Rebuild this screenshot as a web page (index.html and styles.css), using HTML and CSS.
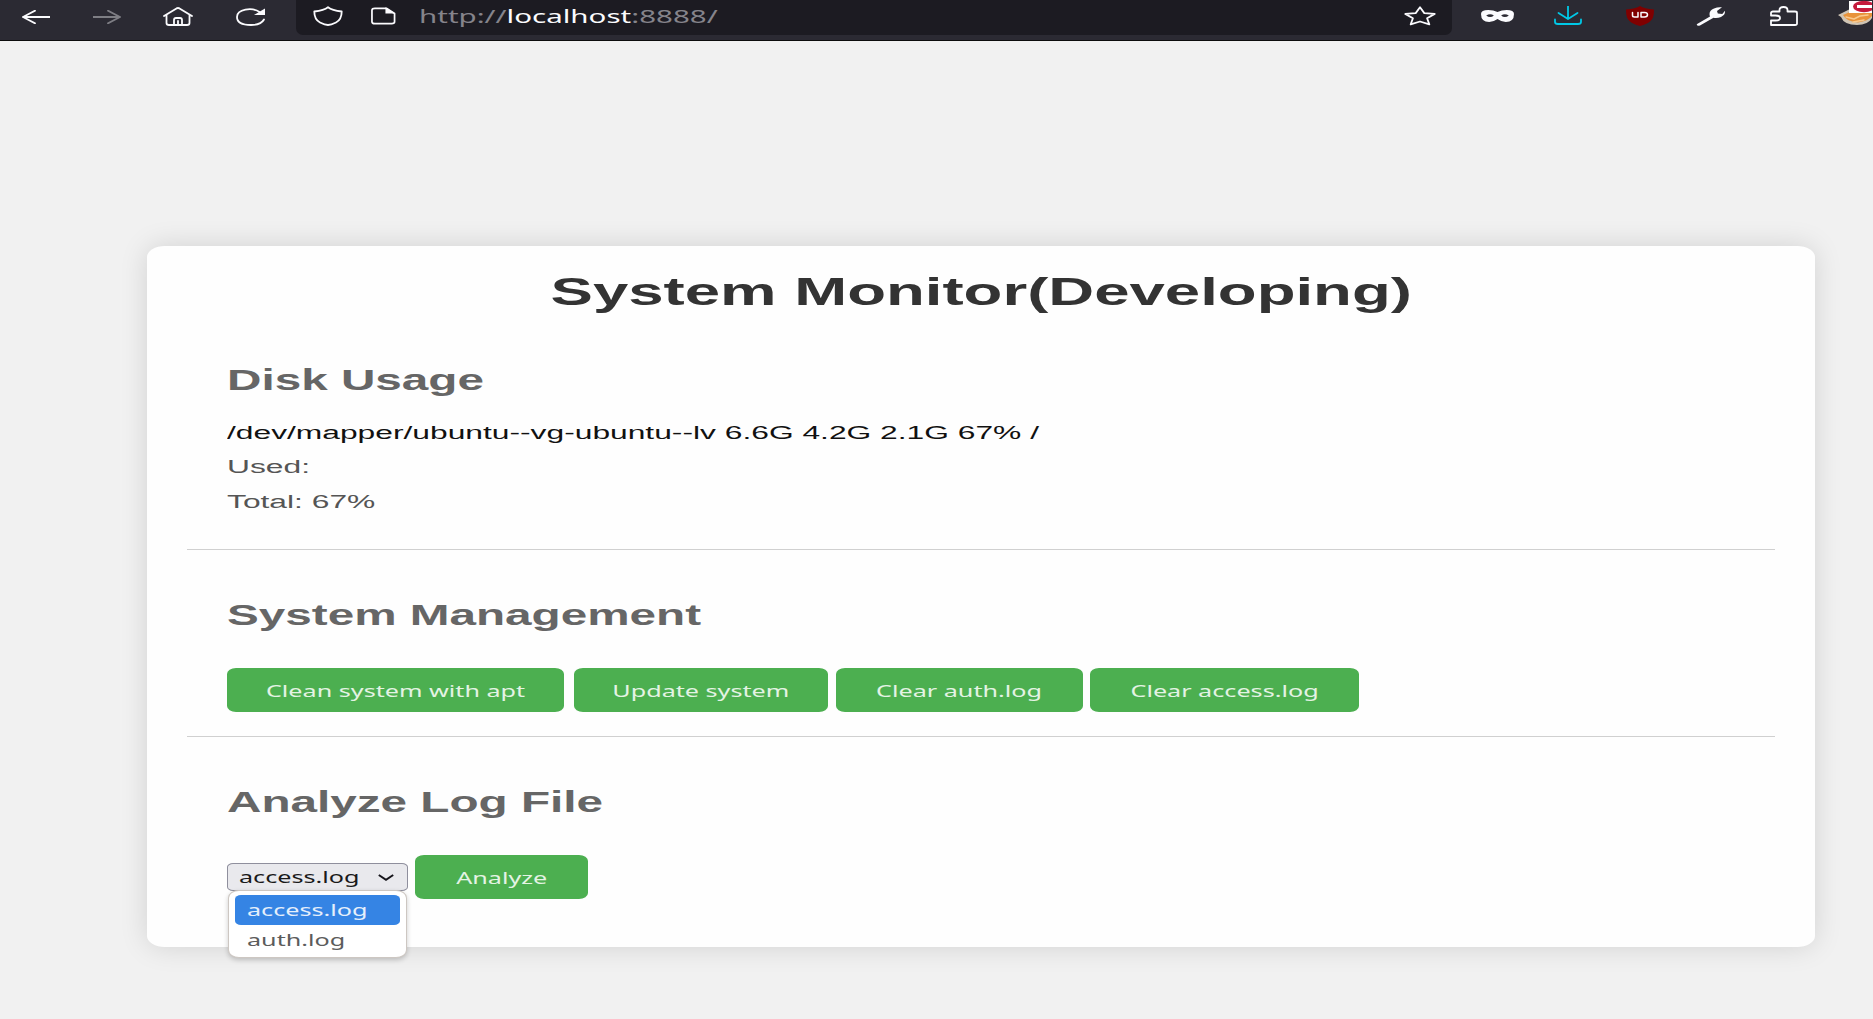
FILE: index.html
```html
<!DOCTYPE html>
<html lang="en">
<head>
<meta charset="utf-8">
<title>System Monitor</title>
<link rel="stylesheet" href="styles.css">
</head>
<body>
<header class="toolbar">
  <nav class="nav">
    <svg class="icon back" viewBox="0 0 28 14"><path d="M28 7H1M13 .7L1 7l12 6.300"/></svg>
    <svg class="icon forward" viewBox="0 0 28 14"><path d="M0 7h27M15 .7L27 7l-12 6.300"/></svg>
    <svg class="icon home" viewBox="0 0 30 19"><path d="M1 9L13.500 1.400q1.500-.8 3 0L29 9M3.500 8v8q0 2 2.500 2h18q2.500 0 2.500-2V8M11 18v-5q0-2 2-2h4q2 0 2 2v5M15 14v4"/></svg>
    <svg class="icon reload" viewBox="0 0 30 18"><path d="M23.500 4C16-1 1 1 1 9s10 8 14 8q10 0 13-5.500"/><path class="solid" d="M29 .5V7H18z"/></svg>
  </nav>
  <div class="urlbar">
    <svg class="icon shield" viewBox="0 0 30 20"><path d="M15 1.200Q11 4.500 1.300 5.500q0 8 5.700 11Q12 19 15 19t8-2.500q5.700-3 5.700-11Q19 4.500 15 1.200z"/></svg>
    <svg class="icon page" viewBox="0 0 26 18"><path d="M4 1h12l8.500 5.500V15q0 2-3 2H4q-3 0-3-2V3q0-2 3-2z"/><path class="solid" d="M15 0l10 6.500H15z"/></svg>
    <div class="address"><span class="wide">http://<b>localhost</b>:8888/</span></div>
    <svg class="icon star" viewBox="0 0 32 20"><path d="M16 1.200l4.300 5.900 10.400.8-7.600 4.400 2.200 6.100L16 15.500l-9.300 2.900 2.200-6.100L1.300 7.900l10.400-.8z"/></svg>
  </div>
  <div class="addons">
    <svg class="icon mask" viewBox="0 0 32 12" preserveAspectRatio="none"><path class="solid" fill-rule="evenodd" d="M0 4Q0 0 7 0q5 0 9 2 4-2 9-2 7 0 7 4 0 8-8 8-4 0-8-3-4 3-8 3-8 0-8-8zM5 5.500Q9 8.500 12.500 5.500 9 3 5 5.500zM19.500 5.500Q23 8.500 27 5.500 23 3 19.500 5.500z"/></svg>
    <svg class="icon download" viewBox="0 0 28 19"><path d="M14 0v13M4.500 7L14 13l9.500-6M1 13.500V16q0 2 3 2h20q3 0 3-2v-2.500"/></svg>
    <svg class="icon blocker" viewBox="0 0 30 20"><path class="badge" d="M15 0q4 2.500 14 3.500 0 9-3.500 11.500-3 3-10.500 5-7.500-2-10.500-5Q1 12.500 1 3.500 11 2.500 15 0z"/><path class="mark" d="M7.500 6.500v3q0 1.500 2 1.500H13V6.500M16 6.500h3.500q3 0 3 2.200T19.500 11H16z"/></svg>
    <svg class="icon wrench" viewBox="0 0 30 19"><path class="solid" d="M.7 17.300L14 9.500q-2-5.500 4-8 4-1.800 8-1.200l-5 3.700.8 2.500 4.500.4L29 3.800Q29.500 8 25 10q-3.500 1.400-7.500.8L4 18.500Q1 19.500.7 17.300z"/></svg>
    <svg class="icon puzzle" viewBox="0 0 28 20"><path d="M1 19v-4.500h4.500q4.500 0 4.500-2.500T5.500 9.500H1V7q0-1.500 2-1.500h6.500V4Q9.500 1 13.500 1t4 3v1.500H25q2 0 2 1.500v10.500q0 1.500-2 1.500z"/></svg>
    <svg class="icon avatar" viewBox="0 0 34 26"><path fill="#cfc4b4" d="M0 15l12-6 22 4v5q-4 7-15 7Q6 25 3 17z"/><path fill="#e8923a" d="M5 15l9-4 20 2v3q-4 5-14 6.500Q9 22 5 15z"/><path d="M8 17l8 2 6-3 8-1M15 22l11-2" stroke="#f9c98d" stroke-width="1.500"/><path fill="#fff" d="M11 1h23v12H11z"/><ellipse cx="26" cy="6.500" rx="11" ry="5.800" fill="#c51b3c"/><path fill="#fff" d="M19 5h15v3H19z"/></svg>
  </div>
</header>
<main class="page-body">
  <div class="card">
    <h1><span class="wide">System Monitor(Developing)</span></h1>
    <section class="block disk">
      <h2><span class="wide">Disk Usage</span></h2>
      <p class="mount"><span class="wide">/dev/mapper/ubuntu--vg-ubuntu--lv 6.6G 4.2G 2.1G 67% /</span></p>
      <p><span class="wide">Used:</span></p>
      <p><span class="wide">Total: 67%</span></p>
    </section>
    <section class="block manage">
      <h2><span class="wide">System Management</span></h2>
      <div class="actions">
        <button class="btn clean"><span class="wide">Clean system with apt</span></button>
        <button class="btn update"><span class="wide">Update system</span></button>
        <button class="btn auth"><span class="wide">Clear auth.log</span></button>
        <button class="btn access"><span class="wide">Clear access.log</span></button>
      </div>
    </section>
    <section class="block analyze">
      <h2><span class="wide">Analyze Log File</span></h2>
      <div class="picker-row">
        <div class="picker">
          <div class="select"><span class="wide">access.log</span><svg class="chevron" viewBox="0 0 16 7"><path d="M.8 1L8 5.800 15.200 1"/></svg></div>
          <div class="menu">
            <div class="option selected"><span class="wide">access.log</span></div>
            <div class="option"><span class="wide">auth.log</span></div>
          </div>
        </div>
        <button class="btn run"><span class="wide">Analyze</span></button>
      </div>
    </section>
  </div>
</main>
</body>
</html>
```
FILE: styles.css
```css
* { box-sizing: border-box; }
body {
  margin: 0;
  height: 1019px;
  overflow: hidden;
  background: #f1f1f1;
  font-family: "Liberation Sans", Arial, sans-serif;
}
h1, h2, p { margin: 0; }

/* Extended-width lettering */
.wide {
  display: inline-block;
  white-space: nowrap;
  transform: scaleX(1.655);
  transform-origin: left center;
}

/* Browser toolbar */
.toolbar {
  display: flex;
  height: 41px;
  background: #2b2a33;
  border-bottom: 1px solid #0c0c0d;
}
.icon {
  display: block;
  flex: none;
  fill: none;
  stroke: #fbfbfe;
  stroke-width: 1.800;
  stroke-linejoin: round;
  stroke-linecap: round;
}
.icon .solid { fill: #fbfbfe; stroke: none; }
.nav { display: flex; width: 296px; padding-left: 22px; flex: none; }
.back { width: 28px; height: 14px; margin-top: 10px; }
.forward { width: 28px; height: 14px; margin: 10px 0 0 43px; opacity: .4; }
.home { width: 30px; height: 19px; margin: 7px 0 0 42px; }
.reload { width: 30px; height: 18px; margin: 8px 0 0 43px; }
.urlbar {
  display: flex;
  flex: none;
  width: 1156px;
  height: 35px;
  padding-left: 17px;
  background: #1c1b22;
  border-radius: 0 0 7px 7px;
}
.shield { width: 30px; height: 20px; margin-top: 6px; }
.page { width: 25px; height: 18px; margin: 7px 0 0 28px; }
.address {
  flex: none;
  width: 985px;
  margin-left: 23px;
  font: 18.500px/24px "Noto Sans", sans-serif;
  padding-top: 4px;
  color: #85848b;
}
.address .wide { transform: scaleX(1.595); }
.address b { font-weight: 400; color: #fbfbfe; }
.star { width: 32px; height: 20px; margin-top: 6px; }
.addons { display: flex; flex: none; padding-left: 29px; }
.mask { width: 33px; height: 12px; margin-top: 10px; }
.download { width: 28px; height: 19px; margin: 6px 0 0 40px; stroke: #00c8e6; }
.blocker { width: 30px; height: 20px; margin: 6px 0 0 43px; }
.blocker .badge { fill: #800000; stroke: none; }
.blocker .mark { stroke-width: 1.500; }
.wrench { width: 30px; height: 19px; margin: 7px 0 0 41px; }
.puzzle { width: 28px; height: 20px; margin: 6px 0 0 44px; }
.avatar { width: 34px; height: 26px; margin-left: 40px; stroke: none; }

/* Card */
.page-body { padding: 205px 58px 0 147px; }
.card {
  height: 701px;
  background: #fefefe;
  border-radius: 18px / 11px;
  box-shadow: 0 0 28px rgba(0, 0, 0, .13);
  padding: 24px 40px 0 39.500px;
}
h1 {
  display: flex;
  justify-content: center;
  height: 44px;
  font-size: 38.400px;
  line-height: 44px;
  color: #333;
}
h1 .wide, .btn .wide { transform-origin: center; }
h2 {
  height: 34px;
  font-size: 28.800px;
  line-height: 34px;
  color: #666;
}
.block { padding: 0 40px; }
.block + .block { border-top: 1px solid #d0d0d0; }
.disk { height: 235px; padding-top: 49px; }
p {
  height: 34.600px;
  font-size: 19.200px;
  line-height: 34.600px;
  color: #555;
}
.mount { margin-top: 18.600px; color: #111; }
.manage { height: 187px; padding-top: 48px; }
.actions { display: flex; margin-top: 36px; }
.btn {
  display: flex;
  flex: none;
  align-items: center;
  justify-content: center;
  height: 44px;
  padding: 2px 0 0;
  border: 0;
  border-radius: 9px / 6px;
  background: #4caf50;
  color: #e4f3e4;
  font: 17px/22px "Noto Sans", sans-serif;
}
.btn .wide, .select .wide, .option .wide { transform: scaleX(1.480); }
.clean { width: 337.500px; }
.update { width: 254px; margin-left: 9.500px; }
.auth { width: 247px; margin-left: 8px; }
.access { width: 269px; margin-left: 7.500px; }
.run { width: 173px; margin-left: 7.500px; }
.analyze { padding-top: 48px; }
.picker-row { display: flex; margin-top: 36px; }
.picker { position: relative; width: 181px; padding-top: 8px; }
.select {
  display: flex;
  justify-content: space-between;
  height: 28px;
  padding: 0 13px 0 11px;
  border: 1.500px solid #8f8f9d;
  border-radius: 6px / 4px;
  background: #e9e9ed;
  color: #1a1a1a;
  font: 17px/26px "Noto Sans", sans-serif;
}
.chevron { width: 16px; height: 7px; margin-top: 10px; fill: none; stroke: #15141a; stroke-width: 2; }
.menu {
  position: absolute;
  top: 35px;
  left: 1px;
  width: 179px;
  height: 68px;
  padding: 4px 6px;
  background: #fff;
  border: 1px solid #cdc7c2;
  border-radius: 11px / 8px;
  box-shadow: 0 2px 5px rgba(0, 0, 0, .2);
}
.option {
  height: 30px;
  padding-left: 12px;
  border-radius: 6px / 4px;
  color: #5c5c5c;
  font: 17px/29px "Noto Sans", sans-serif;
}
.selected { background: #3584e4; color: #e5effb; }
```
